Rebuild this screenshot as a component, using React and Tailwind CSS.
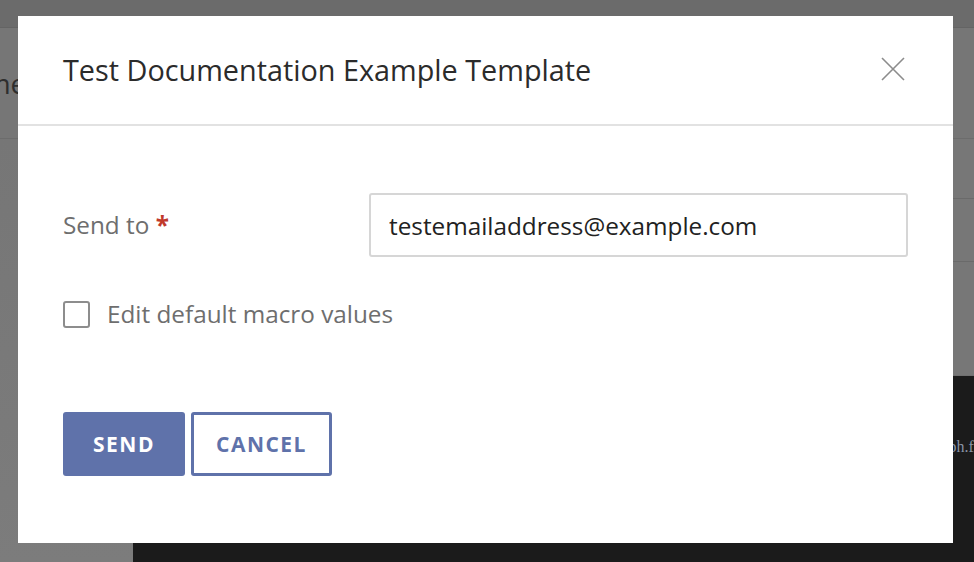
const font = { fontFamily: '"Open Sans", "Noto Sans", sans-serif' };

// Page that sits behind the dimmed overlay
function BackgroundPage() {
    return (
        <div className="h-[562px] w-[974px] overflow-hidden flex flex-col bg-[#777777]">
            <div className="h-[28px] bg-[#6b6b6b] border-b border-[#646464]" />
            <div className="h-[111px] flex items-center border-b border-[#6c6c6c] bg-[#767676]">
                <span className="-ml-[52px] text-[28px] text-[#2e2e2e]" style={font}>Name</span>
            </div>
            <div className="flex-1 flex">
                <div className="w-[133px] shrink-0 bg-gradient-to-b from-[#767676] to-[#7c7c7c]" />
                <div className="flex-1 min-w-0 flex flex-col">
                    <div className="h-[60px] border-b border-[#6a6a6a]" />
                    <div className="h-[63px] border-b border-[#6a6a6a]" />
                    <div className="h-[114px] border-b border-[#707070]" />
                    <div className="flex-1 bg-[#1b1b1b] pt-[58px] pl-[795px] overflow-hidden">
                        <span className="text-[16px] text-[#8a94a6] whitespace-nowrap" style={{ fontFamily: '"Liberation Serif", serif' }}>
                            graph.file
                        </span>
                    </div>
                </div>
            </div>
        </div>
    );
}

export default function App() {
    return (
        <div className="relative h-[562px] w-[974px] overflow-hidden" style={font}>
            <BackgroundPage />

            {/* Modal */}
            <div className="absolute left-[18px] top-[16px] w-[935px] h-[527px] bg-white flex flex-col">
                {/* Header */}
                <div className="h-[110px] flex items-center justify-between pl-[45px] pr-[48px] border-b-2 border-[#e2e2e2]">
                    <h2 className="text-[28.8px] text-[#2b2b2b]">Test Documentation Example Template</h2>
                    <svg width="24" height="24" viewBox="0 0 24 24" className="-mt-[2px]">
                        <path d="M1 1L23 23M23 1L1 23" stroke="#8c8c8c" strokeWidth="1.6" fill="none" />
                    </svg>
                </div>

                {/* Body */}
                <div className="flex-1 flex flex-col px-[45px] pt-[67px]">
                    <div className="flex items-center">
                        <label className="w-[306px] text-[24.3px] text-[#6e6e6e]">
                            Send to <span className="text-[#c0392b] font-bold">*</span>
                        </label>
                        <input
                            type="text"
                            defaultValue="testemailaddress@example.com"
                            className="flex-1 h-[64px] border-2 border-[#d6d6d6] rounded-[3px] px-[18px] text-[24.3px] text-[#222] outline-none"
                        />
                    </div>

                    <div className="flex items-center mt-[39px]">
                        <span className="w-[27px] h-[27px] border-2 border-[#8d8d8d] rounded-[3px]" />
                        <span className="ml-[17px] text-[24.3px] text-[#6e6e6e]">Edit default macro values</span>
                    </div>

                    <div className="flex gap-[6px] mt-[80px]">
                        <button className="w-[122px] h-[64px] bg-[#5f72aa] rounded-[3px] text-white text-[21px] font-bold tracking-[1.5px]">
                            SEND
                        </button>
                        <button className="w-[141px] h-[64px] border-[3px] border-[#5f72aa] rounded-[3px] text-[#5f72aa] text-[21px] font-bold tracking-[1.5px]">
                            CANCEL
                        </button>
                    </div>
                </div>
            </div>
        </div>
    );
}
